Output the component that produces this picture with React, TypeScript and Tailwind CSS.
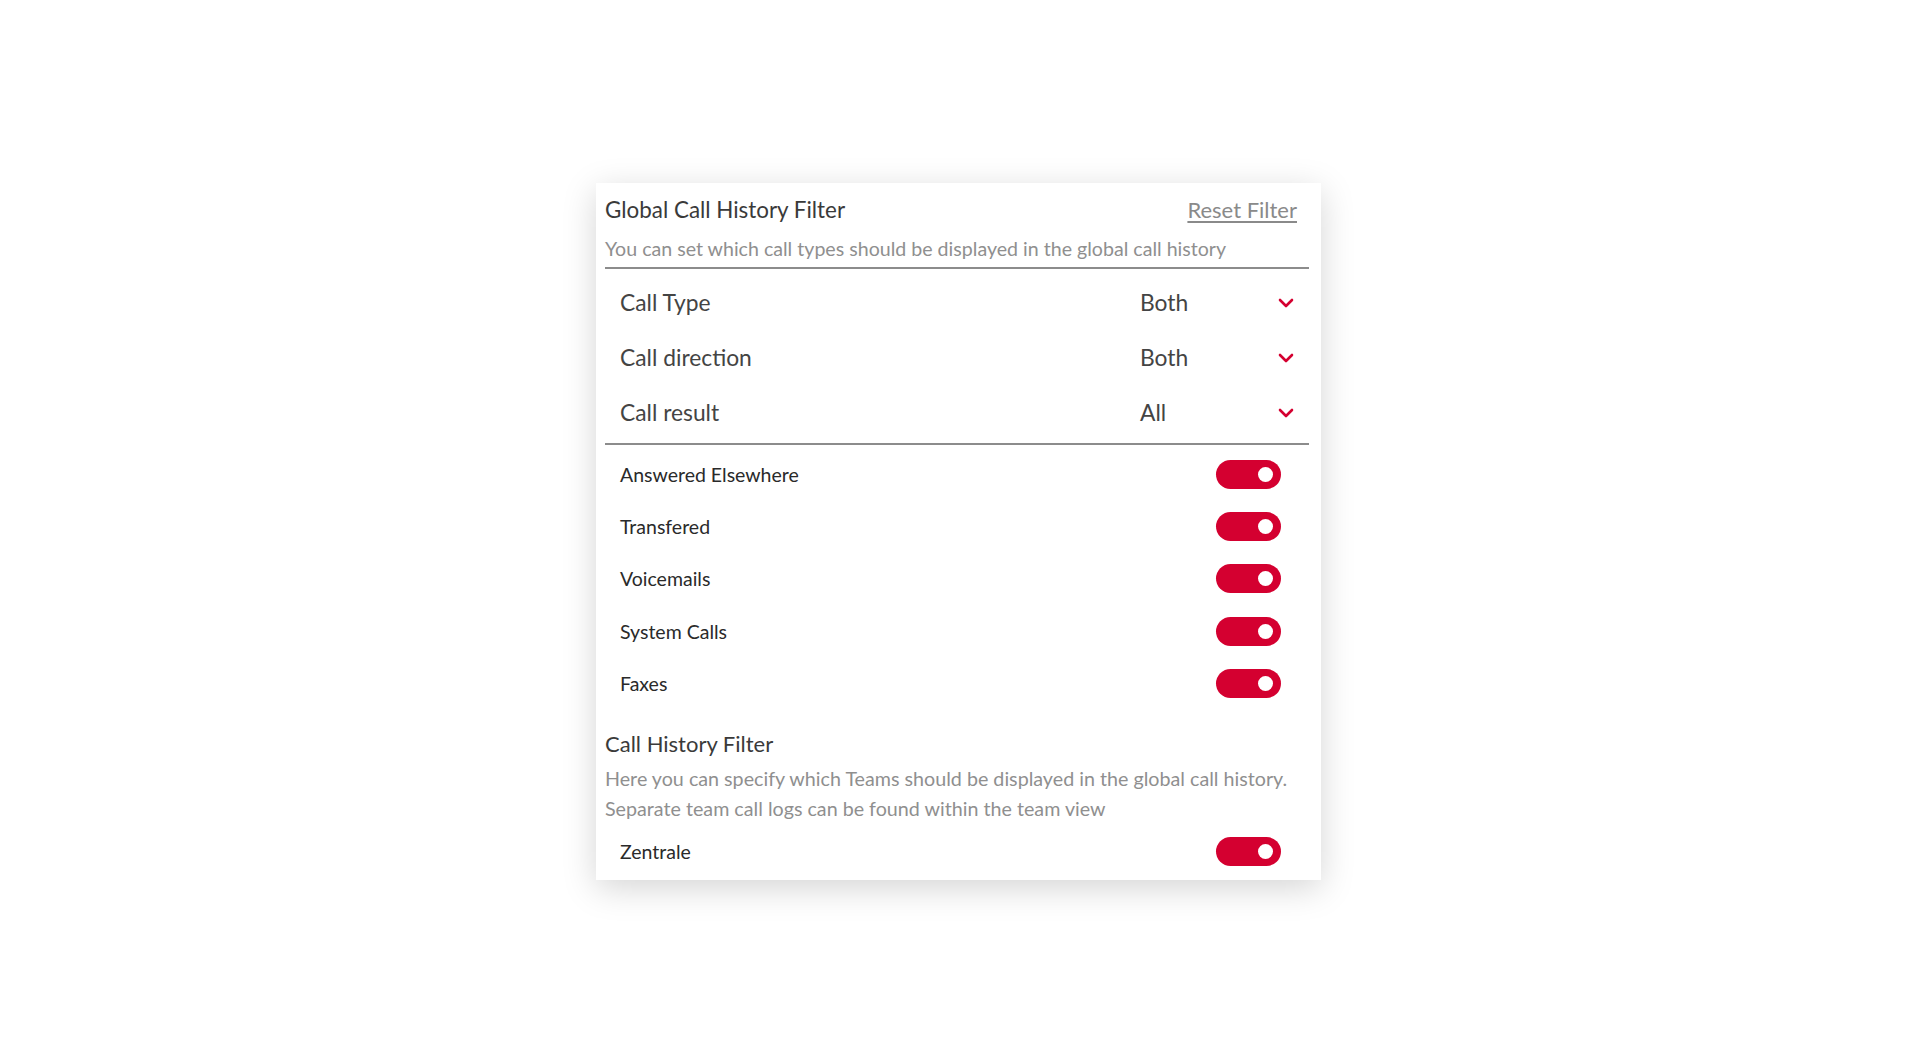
import React from 'react';

const selects = [
  { label: 'Call Type', value: 'Both' },
  { label: 'Call direction', value: 'Both' },
  { label: 'Call result', value: 'All' },
];

const toggles = ['Answered Elsewhere', 'Transfered', 'Voicemails', 'System Calls', 'Faxes'];

function Chevron() {
  return (
    <svg width="16" height="10" viewBox="0 0 16 10" fill="none" aria-hidden>
      <polyline points="2,2 8,8 14,2" stroke="#d40030" strokeWidth="2.6" strokeLinecap="round" strokeLinejoin="round" />
    </svg>
  );
}

function Toggle() {
  return (
    <div className="flex h-[29px] w-[65px] items-center justify-end rounded-full bg-[#d40030] pr-[8px]">
      <div className="h-[15px] w-[15px] rounded-full bg-white" />
    </div>
  );
}

function ToggleRow({ label }: { label: string }) {
  return (
    <div className="flex h-[52.4px] items-center justify-between pl-[15px] pr-[28px]">
      <span className="text-[19.5px] text-[#2a2a2a]">{label}</span>
      <Toggle />
    </div>
  );
}

export default function App() {
  return (
    <div className="min-h-screen bg-white font-['Lato',sans-serif]">
      <div className="flex justify-center pr-[3px] pt-[183px]">
        <div className="w-[725px] bg-white pb-[3px] pl-[9px] pr-[12px] pt-[13px] shadow-[0_8px_32px_rgba(0,0,0,0.17)]">
          {/* Header */}
          <div className="flex items-center justify-between">
            <h1 className="text-[22.4px] leading-[28px] text-[#3a3a3a]">Global Call History Filter</h1>
            <a href="#" className="mr-[12px] text-[22px] leading-[28px] text-[#8a8a8a] underline underline-offset-[3px]">
              Reset Filter
            </a>
          </div>
          <p className="mt-[13px] text-[19.6px] leading-[24px] text-[#8f8f8f]">
            You can set which call types should be displayed in the global call history
          </p>
          <div className="mt-[6px] h-[2px] bg-[#8c8c8c]" />

          {/* Selects */}
          <div className="pt-[5.5px] pb-[3.5px]">
            {selects.map((s) => (
              <div key={s.label} className="flex h-[55px] items-center pl-[15px]">
                <span className="flex-1 text-[22.8px] text-[#444]">{s.label}</span>
                <span className="w-[138px] text-[22.8px] text-[#444]">{s.value}</span>
                <span className="flex w-[31px] justify-start pt-[2px]">
                  <Chevron />
                </span>
              </div>
            ))}
          </div>
          <div className="h-[2px] bg-[#8c8c8c]" />

          {/* Toggles */}
          <div className="pt-[3px]">
            {toggles.map((t) => (
              <ToggleRow key={t} label={t} />
            ))}
          </div>

          {/* Team filter */}
          <h2 className="mt-[20px] text-[22px] leading-[28px] text-[#3a3a3a]">Call History Filter</h2>
          <p className="mt-[6px] text-[19.7px] leading-[30px] text-[#8f8f8f]">
            Here you can specify which Teams should be displayed in the global call history.
            <br />
            Separate team call logs can be found within the team view
          </p>
          <div className="mt-[1px]">
            <ToggleRow label="Zentrale" />
          </div>
        </div>
      </div>
    </div>
  );
}
